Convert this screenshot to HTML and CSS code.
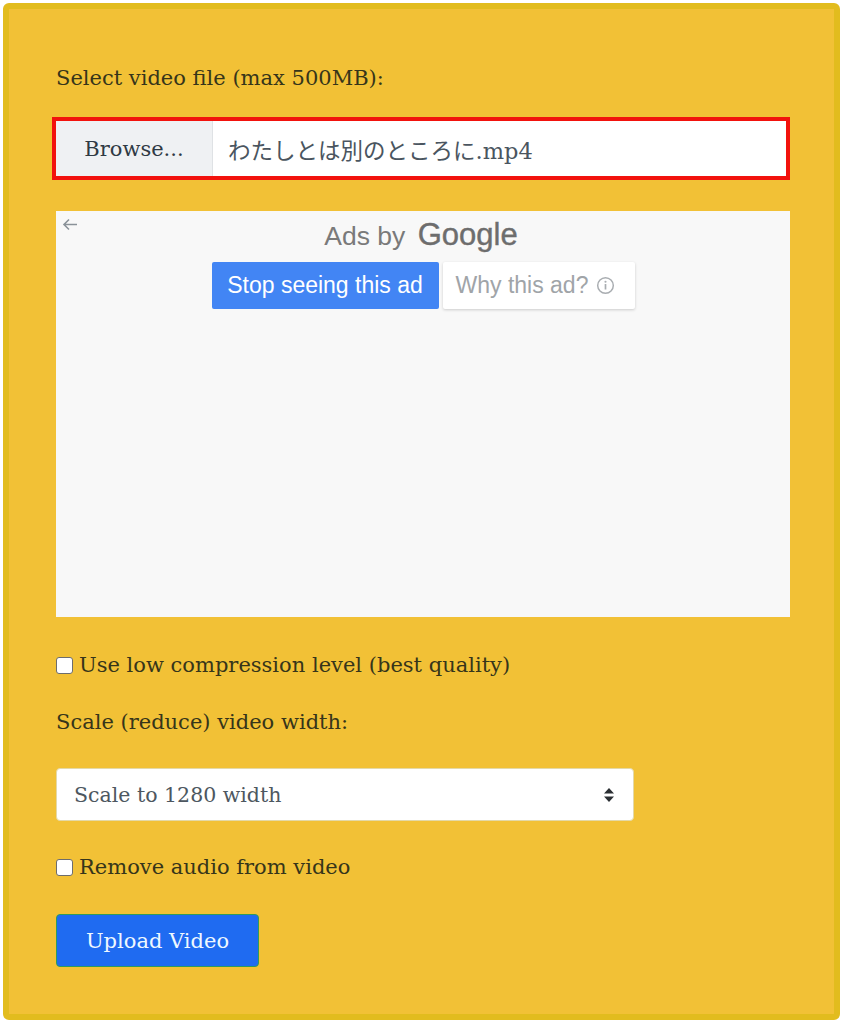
FILE: index.html
```html
<!DOCTYPE html>
<html lang="en">
<head>
    <meta charset="UTF-8">
    <meta name="viewport" content="width=device-width, initial-scale=1.0">
    <title>Compress Video</title>
    <link rel="stylesheet" href="styles.css">
</head>
<body>
    <!-- upload form -->
    <div class="panel">
        <form class="upload-form">
            <label class="field-label">Select video file (max 500MB):</label>
            <div class="file-box">
                <span class="browse-btn">Browse...</span>
                <span class="file-name">わたしとは別のところに.mp4</span>
            </div>

            <!-- ad slot -->
            <div class="ad-box">
                <div class="ad-top">
                    <span class="ad-back">
                        <svg width="16" height="13" viewBox="0 0 16 13"><path d="M15 6.5H2M7 1.5L2 6.5l5 5" fill="none" stroke="#8a9299" stroke-width="1.6"/></svg>
                    </span>
                    <div class="ad-title">Ads by <span class="ad-google">Google</span></div>
                </div>
                <div class="ad-actions">
                    <span class="ad-stop">Stop seeing this ad</span>
                    <span class="ad-why">Why this ad?
                        <svg width="19" height="19" viewBox="0 0 18 18"><circle cx="9" cy="9" r="7.4" fill="none" stroke="#a9adb1" stroke-width="1.4"/><rect x="8.2" y="7.6" width="1.6" height="5.2" fill="#a9adb1"/><circle cx="9" cy="5.4" r="1" fill="#a9adb1"/></svg>
                    </span>
                </div>
            </div>

            <label class="check-row"><input type="checkbox" class="check"> Use low compression level (best quality)</label>

            <label class="field-label scale-label">Scale (reduce) video width:</label>
            <div class="select-box">
                <span>Scale to 1280 width</span>
                <svg width="12" height="18" viewBox="0 0 12 18"><path d="M6 2L11 7.5H1z M6 16L11 10.5H1z" fill="#2b2f33"/></svg>
            </div>

            <label class="check-row check-audio"><input type="checkbox" class="check"> Remove audio from video</label>

            <button type="button" class="upload-btn">Upload Video</button>
        </form>
    </div>
</body>
</html>
```

FILE: styles.css
```css
* {
    margin: 0;
    padding: 0;
    box-sizing: border-box;
}

body {
    background-color: #fff;
    font-family: 'DejaVu Serif', 'Noto Sans CJK JP', serif;
    color: #36351a;
}

.panel {
    margin: 3px 0 0 3px;
    width: 837px;
    height: 1017px;
    background-color: #f2c136;
    border: 6px solid #e2bc1e;
    border-radius: 6px;
    padding: 54px 44px 0 47px;
}

.upload-form {
    display: flex;
    flex-direction: column;
    align-items: flex-start;
}

.field-label {
    font-size: 21px;
    line-height: 30px;
}

.file-box {
    margin-top: 24px;
    margin-left: -4px;
    width: calc(100% + 4px);
    height: 63px;
    border: 4px solid #f2120d;
    display: flex;
    background-color: #fff;
}

.browse-btn {
    width: 157px;
    background-color: #eff1f3;
    border-right: 1px solid #dfe2e5;
    display: flex;
    align-items: center;
    justify-content: center;
    font-size: 21px;
    color: #2f3a44;
}

.file-name {
    display: flex;
    align-items: center;
    padding-left: 15px;
    font-size: 22.5px;
    color: #4a5560;
}

.ad-box {
    margin-top: 31px;
    width: 100%;
    height: 406px;
    background-color: #f8f8f8;
    font-family: 'Liberation Sans', Arial, sans-serif;
}

.ad-top {
    display: flex;
    height: 51px;
}

.ad-back {
    padding: 6px 0 0 6px;
    width: 0;
    overflow: visible;
}

.ad-title {
    flex: 1;
    text-align: center;
    margin-right: 10px;
    font-size: 26.5px;
    line-height: 48px;
    color: #7a7a7a;
}

.ad-google {
    font-size: 31px;
    color: #6d6d6d;
    margin-left: 5px;
    -webkit-text-stroke: 0.4px #6d6d6d;
}

.ad-actions {
    display: flex;
    justify-content: center;
    gap: 4px;
}

.ad-stop,
.ad-why {
    height: 47px;
    display: flex;
    align-items: center;
    font-size: 23px;
    border-radius: 2px;
}

.ad-stop {
    width: 227px;
    justify-content: center;
    background-color: #4285f4;
    color: #fff;
}

.ad-why {
    width: 192px;
    padding-left: 13px;
    gap: 8px;
    background-color: #fff;
    color: #a0a4a8;
    box-shadow: 0 1px 3px rgba(0, 0, 0, 0.18);
}

.check-row {
    margin-top: 33px;
    display: flex;
    align-items: center;
    gap: 6px;
    font-size: 21px;
    line-height: 30px;
}

.check {
    appearance: none;
    width: 17px;
    height: 17px;
    background-color: #fff;
    border: 1px solid #6d6d6d;
    border-radius: 3px;
}

.scale-label {
    margin-top: 27px;
}

.select-box {
    margin-top: 31px;
    width: 578px;
    height: 53px;
    background-color: #fff;
    border: 1px solid #e4d9a8;
    border-radius: 4px;
    display: flex;
    align-items: center;
    justify-content: space-between;
    padding: 0 18px 0 17px;
    font-size: 20.5px;
    color: #4d5760;
}

.check-audio {
    margin-top: 31px;
}

.upload-btn {
    margin-top: 32px;
    width: 203px;
    height: 53px;
    background-color: #1f6bf1;
    border: 1px solid #2f9a5e;
    border-radius: 4px;
    font-family: 'DejaVu Serif', serif;
    font-size: 21px;
    color: #eef8ff;
}
```
